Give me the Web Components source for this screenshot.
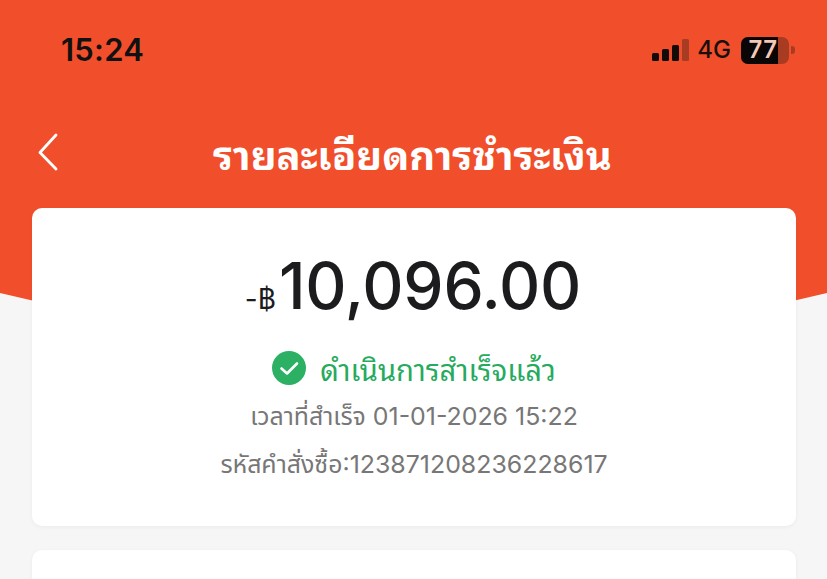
<!DOCTYPE html>
<html lang="th"><head><meta charset="utf-8"><title>รายละเอียดการชำระเงิน</title>
<style>html,body{margin:0;padding:0;background:#f6f6f6}body{font-family:Inter,"Noto Sans",sans-serif}</style></head>
<body>
<pay-screen>
  <status-bar slot="top" time="15:24" level="77"></status-bar>
  <nav-bar slot="top">รายละเอียดการชำระเงิน</nav-bar>
  <pay-card class="summary">
    <pay-amount prefix="-฿" value="10,096.00"></pay-amount>
    <pay-status>ดำเนินการสำเร็จแล้ว</pay-status>
    <pay-meta>เวลาที่สำเร็จ 01-01-2026 15:22</pay-meta>
    <pay-meta>รหัสคำสั่งซื้อ:123871208236228617</pay-meta>
  </pay-card>
  <pay-card></pay-card>
</pay-screen>
<script>
const THAI='"Noto Sans Thai Looped",Loma,Garuda,"Noto Sans Thai","Noto Sans",Inter,sans-serif';
function def(name, html){
  customElements.define(name, class extends HTMLElement{
    connectedCallback(){
      if(this.shadowRoot) return;
      this.attachShadow({mode:'open'}).innerHTML = typeof html==='function'?html(this):html;
    }
  });
}
def('pay-screen',`<style>
:host{display:block;position:relative;width:827px;height:579px;overflow:hidden;background:#f6f6f6}
svg{position:absolute;left:0;top:0;display:block}
.c{position:relative;display:flex;flex-direction:column}
.cards{display:flex;flex-direction:column;gap:24px;padding:0 31px 0 32px}
</style>
<svg width="827" height="345" viewBox="0 0 827 345" aria-hidden="true"><path d="M0 0H827V293Q413.5 393 0 293Z" fill="#f14f2c"/></svg>
<div class="c"><slot name="top"></slot><div class="cards"><slot></slot></div></div>`);
def('status-bar',el=>`<style>
:host{display:flex;align-items:center;justify-content:space-between;height:100px;padding:0 32px 2px 61px;box-sizing:border-box;color:#111}
.t{font:600 31px/1 Inter,sans-serif;letter-spacing:.25px}
.r{display:flex;align-items:center;gap:8px;padding-top:2px}
.n{font:500 24px/1 Inter,sans-serif;color:#1a0f0b}
.b{position:relative;width:48px;height:27px;border-radius:7px;overflow:hidden;background:#a83c22;display:flex}
.f{width:37px;background:#0a0605}
.l{position:absolute;inset:0;display:flex;align-items:center;justify-content:center;font:600 24px/1 Inter,sans-serif;color:#f4c8b6;letter-spacing:.5px;padding-right:4px;text-shadow:0 0 1px #000}
.batt{display:flex;align-items:center;gap:2px;margin-left:2px}
.nub{width:4px;height:8px;background:#a83c22;border-radius:0 3px 3px 0}
</style>
<span class="t">${el.getAttribute('time')}</span>
<span class="r">
<svg width="37" height="22" viewBox="0 0 37 22" aria-hidden="true"><rect x="0" y="14" width="7" height="8" rx="1.5" fill="#120b08"/><rect x="10" y="10" width="7" height="12" rx="1.5" fill="#120b08"/><rect x="20" y="6" width="7" height="16" rx="1.5" fill="#120b08"/><rect x="30" y="0" width="7" height="22" rx="1.5" fill="#a83c22"/></svg>
<span class="n">4G</span>
<span class="batt"><span class="b"><span class="f"></span><span class="l">${el.getAttribute('level')}</span></span><span class="nub"></span></span>
</span>`);
def('nav-bar',`<style>
:host{display:block;position:relative;height:108px;color:#fff;box-sizing:border-box;padding-top:27px;text-align:center}
svg{position:absolute;left:38px;top:33px}
.t{font:700 40px/50px ${THAI};padding-right:2px;white-space:nowrap}
</style>
<svg width="20" height="38" viewBox="0 0 20 38" fill="none" aria-hidden="true"><path d="M18 2 2 19.5 18 36" stroke="#fff" stroke-width="2.8" stroke-linecap="round" stroke-linejoin="round"/></svg>
<div class="t"><slot></slot></div>`);
def('pay-card',`<style>
:host{display:flex;flex-direction:column;align-items:center;background:#fff;border-radius:10px;box-shadow:0 1px 4px rgba(0,0,0,.05);min-height:60px}
:host(.summary){height:318px;box-sizing:border-box;padding-top:40px}
</style><slot></slot>`);
def('pay-amount',el=>`<style>
:host{display:flex;align-items:baseline;color:#1c1c1e;height:75px;margin-bottom:26px;line-height:75px;padding-right:2px}
.p{font:400 28px/75px Inter,"Noto Sans",sans-serif;margin-right:3px}
.v{font:500 64px/75px Inter,sans-serif;letter-spacing:-.2px}
</style><span class="p">${el.getAttribute('prefix')}</span><span class="v">${el.getAttribute('value')}</span>`);
def('pay-status',`<style>
:host{display:flex;align-items:center;gap:14px;color:#26aa5d;height:38px;margin-bottom:5px}
svg{display:block}
span{font:400 29.1px/38px ${THAI}}
</style>
<svg width="34" height="34" viewBox="0 0 34 34" aria-hidden="true"><circle cx="17" cy="17" r="17" fill="#2bb064"/><path d="M9.5 17.5 15 22.5 25 12.5" fill="none" stroke="#fff" stroke-width="2.6" stroke-linecap="round" stroke-linejoin="round"/></svg>
<span><slot></slot></span>`);
def('pay-meta',`<style>
:host{display:block;color:#777;font:400 24.9px/48px Inter,"Noto Sans Thai","Noto Sans",sans-serif}
</style><slot></slot>`);
</script>
</body></html>
